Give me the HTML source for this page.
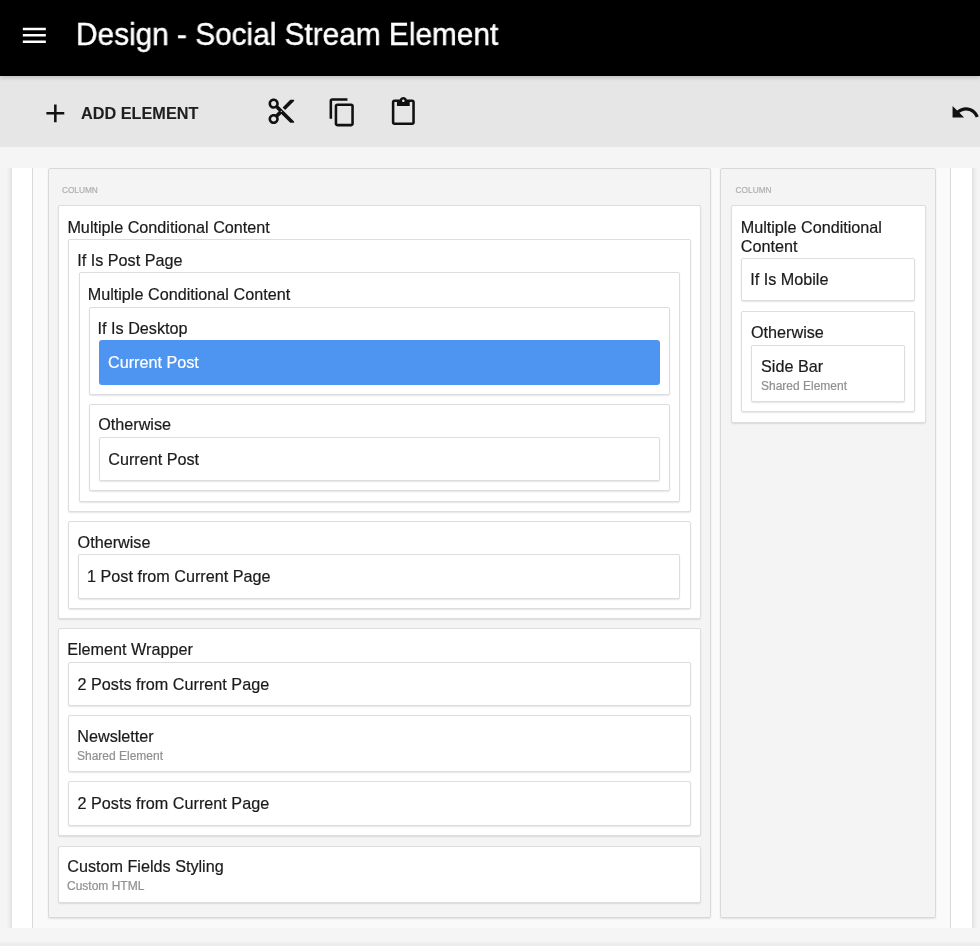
<!DOCTYPE html>
<html><head><meta charset="utf-8"><style>
html,body{margin:0;padding:0;width:980px;height:946px;overflow:hidden;background:#f5f5f5;font-family:"Liberation Sans",sans-serif;position:relative}
.t{position:absolute;white-space:nowrap;-webkit-text-stroke:0.2px currentColor}
.hdr{position:absolute;left:0;top:0;width:980px;height:76px;background:#000;z-index:3;box-shadow:0 2px 4px rgba(0,0,0,.16)}
.tb{position:absolute;left:0;top:76px;width:980px;height:71px;background:#e6e6e6;z-index:2}
.scroll{position:absolute;left:0;top:168px;width:980px;height:760px;overflow:hidden}
.paper{position:absolute;left:12px;top:-40px;width:959.5px;height:900px;background:#fff;box-shadow:0 0 6px rgba(0,0,0,.18)}
.row{position:absolute;left:32px;top:-40px;width:919px;height:900px;background:#fafafa;border-left:1px solid #d9d9d9;border-right:1px solid #d9d9d9;box-sizing:border-box}
.inner{position:absolute;left:0;top:-168px;width:980px;height:946px;will-change:transform}
.col{position:absolute;box-sizing:border-box;background:#f4f4f4;border:1px solid #d9d9d9;border-radius:2px;box-shadow:0 1px 1.5px rgba(0,0,0,.1)}
.el{position:absolute;box-sizing:border-box;background:#fff;border:1px solid #dddddd;border-radius:2px;box-shadow:0 1px 1.5px rgba(0,0,0,.1)}
.blue{position:absolute;box-sizing:border-box;background:#4d95f1;border-radius:3px}
</style></head><body>
<div class="hdr"><svg style="position:absolute;left:19.4px;top:19.5px" width="30.67" height="30.67" viewBox="0 0 24 24"><path fill="#fff" d="M3 18h18v-2H3v2zm0-5h18v-2H3v2zm0-7v2h18V6H3z"/></svg><div class="t" style="left:76.3px;top:14px;font-size:31.6px;line-height:40px;color:#fff;font-weight:normal;transform:scaleX(.943);transform-origin:0 0;-webkit-text-stroke:0.45px #fff;will-change:transform">Design - Social Stream Element</div></div>
<div class="tb"></div><div style="position:absolute;left:0;top:0;width:980px;height:150px;z-index:4;will-change:transform"><svg style="position:absolute;left:40px;top:98.1px" width="30.67" height="30.67" viewBox="0 0 24 24"><path fill="#111" d="M19 13h-6v6h-2v-6H5v-2h6V5h2v6h6v2z"/></svg><div class="t" style="left:80.6px;top:103px;font-size:17.4px;line-height:20px;color:#1e1e1e;font-weight:bold;transform:scaleX(.935);transform-origin:0 0;-webkit-text-stroke:0.1px #1e1e1e">ADD ELEMENT</div><svg style="position:absolute;left:265.8px;top:96.3px" width="30.67" height="30.67" viewBox="0 0 24 24"><path fill="#111" d="M9.64 7.64c.23-.5.36-1.05.36-1.64 0-2.21-1.79-4-4-4S2 3.79 2 6s1.79 4 4 4c.59 0 1.14-.13 1.64-.36L10 12l-2.36 2.36C7.14 14.13 6.59 14 6 14c-2.21 0-4 1.790-4 4s1.79 4 4 4 4-1.79 4-4c0-.59-.13-1.14-.36-1.64L12 14l7 7h3v-1L9.64 7.64zM6 8c-1.1 0-2-.89-2-2s.9-2 2-2 2 .89 2 2-.9 2-2 2zm0 12c-1.1 0-2-.89-2-2s.9-2 2-2 2 .89 2 2-.9 2-2 2zm6-7.5c-.28 0-.5-.22-.5-.5s.22-.5.5-.5.5.22.5.5-.22.5-.5.5zM19 3l-6 6 2 2 7-7V3z"/></svg><svg style="position:absolute;left:327.4px;top:96.7px" width="30.67" height="30.67" viewBox="0 0 24 24"><path fill="#111" d="M16 1H4c-1.1 0-2 .9-2 2v14h2V3h12V1zm3 4H8c-1.1 0-2 .9-2 2v14c0 1.1.9 2 2 2h11c1.1 0 2-.9 2-2V7c0-1.1-.9-2-2-2zm0 16H8V7h11v14z"/></svg><svg style="position:absolute;left:388.0px;top:96.8px" width="30.67" height="30.67" viewBox="0 0 24 24"><path fill="#111" d="M19 2h-4.18C14.4.84 13.3 0 12 0c-1.3 0-2.4.84-2.82 2H5c-1.1 0-2 .9-2 2v16c0 1.1.9 2 2 2h14c1.1 0 2-.9 2-2V4c0-1.1-.9-2-2-2zm-7 0c.55 0 1 .45 1 1s-.45 1-1 1-1-.45-1-1 .45-1 1-1zm7 18H5V4h2v3h10V4h2v16z"/></svg><svg style="position:absolute;left:950.0px;top:96.6px" width="30.67" height="30.67" viewBox="0 0 24 24"><path fill="#111" d="M12.5 8c-2.65 0-5.05.99-6.9 2.6L2 7v9h9l-3.62-3.62c1.39-1.16 3.16-1.88 5.12-1.88 3.54 0 6.55 2.31 7.6 5.5l2.37-.78C21.08 11.03 17.15 8 12.5 8z"/></svg></div>
<div class="scroll"><div class="paper"></div><div class="row"></div>
<div class="inner">
<div class="col" style="left:48px;top:168px;width:663px;height:750px;"></div>
<div class="col" style="left:720px;top:168px;width:216px;height:750px;"></div>
<div class="t" style="left:61.9px;top:185px;font-size:8.3px;line-height:10px;color:#b0b0b0;font-weight:normal;">COLUMN</div>
<div class="t" style="left:735.6px;top:185px;font-size:8.3px;line-height:10px;color:#b0b0b0;font-weight:normal;">COLUMN</div>
<div class="el" style="left:58px;top:205px;width:643px;height:414px;"></div>
<div class="el" style="left:68px;top:239px;width:623px;height:273px;"></div>
<div class="el" style="left:79px;top:272px;width:601px;height:230px;"></div>
<div class="el" style="left:89px;top:307px;width:581px;height:88px;"></div>
<div class="el" style="left:89px;top:404px;width:581px;height:87px;"></div>
<div class="el" style="left:99px;top:437px;width:561px;height:44px;"></div>
<div class="el" style="left:68px;top:521px;width:623px;height:88px;"></div>
<div class="el" style="left:78px;top:554px;width:602px;height:45px;"></div>
<div class="el" style="left:58px;top:628px;width:643px;height:208px;"></div>
<div class="el" style="left:68px;top:662px;width:623px;height:44px;"></div>
<div class="el" style="left:68px;top:715px;width:623px;height:57px;"></div>
<div class="el" style="left:68px;top:781px;width:623px;height:45px;"></div>
<div class="el" style="left:58px;top:846px;width:643px;height:57px;"></div>
<div class="blue" style="left:99px;top:340px;width:561px;height:45px;"></div>
<div class="t" style="left:67.4px;top:217px;font-size:16.2px;line-height:20px;color:#1b1b1b;font-weight:normal;">Multiple Conditional Content</div>
<div class="t" style="left:77.2px;top:250px;font-size:16.2px;line-height:20px;color:#1b1b1b;font-weight:normal;">If Is Post Page</div>
<div class="t" style="left:87.7px;top:284px;font-size:16.2px;line-height:20px;color:#1b1b1b;font-weight:normal;">Multiple Conditional Content</div>
<div class="t" style="left:97.6px;top:318px;font-size:16.2px;line-height:20px;color:#1b1b1b;font-weight:normal;">If Is Desktop</div>
<div class="t" style="left:98.2px;top:414px;font-size:16.2px;line-height:20px;color:#1b1b1b;font-weight:normal;">Otherwise</div>
<div class="t" style="left:108.2px;top:449px;font-size:16.2px;line-height:20px;color:#1b1b1b;font-weight:normal;">Current Post</div>
<div class="t" style="left:77.6px;top:532px;font-size:16.2px;line-height:20px;color:#1b1b1b;font-weight:normal;">Otherwise</div>
<div class="t" style="left:87px;top:566px;font-size:16.2px;line-height:20px;color:#1b1b1b;font-weight:normal;">1 Post from Current Page</div>
<div class="t" style="left:67.2px;top:639px;font-size:16.2px;line-height:20px;color:#1b1b1b;font-weight:normal;">Element Wrapper</div>
<div class="t" style="left:77.5px;top:674px;font-size:16.2px;line-height:20px;color:#1b1b1b;font-weight:normal;">2 Posts from Current Page</div>
<div class="t" style="left:77.3px;top:726px;font-size:16.2px;line-height:20px;color:#1b1b1b;font-weight:normal;">Newsletter</div>
<div class="t" style="left:77.5px;top:793px;font-size:16.2px;line-height:20px;color:#1b1b1b;font-weight:normal;">2 Posts from Current Page</div>
<div class="t" style="left:67.2px;top:856px;font-size:16.2px;line-height:20px;color:#1b1b1b;font-weight:normal;">Custom Fields Styling</div>
<div class="t" style="left:108px;top:352px;font-size:16.2px;line-height:20px;color:#fff;font-weight:normal;">Current Post</div>
<div class="t" style="left:77px;top:748px;font-size:12px;line-height:16px;color:#909090;font-weight:normal;">Shared Element</div>
<div class="t" style="left:67px;top:878px;font-size:12px;line-height:16px;color:#909090;font-weight:normal;">Custom HTML</div>
<div class="el" style="left:731px;top:205px;width:195px;height:218px;"></div>
<div class="el" style="left:741px;top:258px;width:174px;height:43px;"></div>
<div class="el" style="left:741px;top:311px;width:174px;height:101px;"></div>
<div class="el" style="left:751px;top:345px;width:154px;height:57px;"></div>
<div class="t" style="left:740.7px;top:217px;font-size:16.2px;line-height:20px;color:#1b1b1b;font-weight:normal;">Multiple Conditional</div>
<div class="t" style="left:740.7px;top:236px;font-size:16.2px;line-height:20px;color:#1b1b1b;font-weight:normal;">Content</div>
<div class="t" style="left:750.2px;top:269px;font-size:16.2px;line-height:20px;color:#1b1b1b;font-weight:normal;">If Is Mobile</div>
<div class="t" style="left:751px;top:322px;font-size:16.2px;line-height:20px;color:#1b1b1b;font-weight:normal;">Otherwise</div>
<div class="t" style="left:761px;top:356px;font-size:16.2px;line-height:20px;color:#1b1b1b;font-weight:normal;">Side Bar</div>
<div class="t" style="left:761px;top:378px;font-size:12px;line-height:16px;color:#909090;font-weight:normal;">Shared Element</div>
</div></div>
<div style="position:absolute;left:0;top:942px;width:980px;height:4px;background:linear-gradient(#f1f1f1,#ebebeb)"></div>
</body></html>
